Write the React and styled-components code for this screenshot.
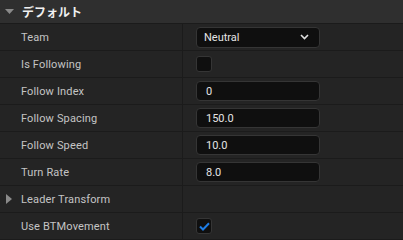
import styled, { createGlobalStyle } from "styled-components";

const GlobalStyle = createGlobalStyle`
  html, body {
    margin: 0;
    padding: 0;
    background: #242424;
  }
  * { box-sizing: border-box; }
`;

const Panel = styled.div`
  width: 403px;
  height: 240px;
  overflow: hidden;
  background: #242424;
  font-family: Roboto, "Noto Sans", "Noto Sans CJK JP", sans-serif;
  font-size: 11px;
  color: #c4c4c4;
`;

const Header = styled.div`
  display: flex;
  align-items: center;
  height: 24px;
  padding-left: 5px;
  gap: 8px;
  background: #2f2f2f;
  border-bottom: 1px solid #1b1b1b;
  color: #f0f0f0;
  font-family: "Noto Sans CJK JP", "Noto Sans", sans-serif;
  font-weight: bold;
  font-size: 12px;
`;

const Row = styled.div`
  display: grid;
  grid-template-columns: 182px 1px 1fr;
  height: 27px;
  border-bottom: 1px solid #1b1b1b;
`;

const Label = styled.div`
  display: flex;
  align-items: center;
  gap: 9px;
  padding-left: ${p => (p.$expander ? "6px" : "21px")};
  letter-spacing: 0.15px;
`;

const Divider = styled.div`
  background: #1b1b1b;
`;

const Value = styled.div`
  display: flex;
  align-items: center;
  padding-left: 13px;
`;

const Field = styled.div`
  display: flex;
  align-items: center;
  justify-content: space-between;
  width: 124px;
  height: ${p => (p.$tall ? "21px" : "20px")};
  padding: 0 10px 0 ${p => (p.$tall ? "7px" : "9px")};
  background: #0f0f0f;
  border: 1px solid #353535;
  border-radius: 4px;
  color: #e4e4e4;
  font-size: 11px;
`;

const Check = styled.div`
  display: flex;
  align-items: center;
  justify-content: center;
  width: 16px;
  height: 16px;
  background: #0f0f0f;
  border: 1px solid #353535;
  border-radius: 3px;
`;

const Chevron = () => (
  <svg width="9" height="6" viewBox="0 0 9 6">
    <path d="M1 1 L4.5 4.5 L8 1" fill="none" stroke="#e0e0e0" strokeWidth="1.6" />
  </svg>
);

const TriDown = () => (
  <svg width="9" height="5" viewBox="0 0 9 5">
    <path d="M0 0 H9 L4.5 5 Z" fill="#8a8a8a" />
  </svg>
);

const TriRight = () => (
  <svg width="6" height="10" viewBox="0 0 6 10">
    <path d="M0 0 V10 L6 5 Z" fill="#8a8a8a" />
  </svg>
);

const Tick = () => (
  <svg width="11" height="9" viewBox="0 0 11 9">
    <path d="M1 4.5 L4 7.5 L10 1.3" fill="none" stroke="#1e7de6" strokeWidth="2" />
  </svg>
);

const fields = [
  ["Follow Index", "0"],
  ["Follow Spacing", "150.0"],
  ["Follow Speed", "10.0"],
  ["Turn Rate", "8.0"],
];

export default function App() {
  return (
    <Panel>
      <GlobalStyle />
      <Header>
        <TriDown />
        デフォルト
      </Header>
      <Row>
        <Label>Team</Label>
        <Divider />
        <Value>
          <Field $tall>
            Neutral
            <Chevron />
          </Field>
        </Value>
      </Row>
      <Row>
        <Label>Is Following</Label>
        <Divider />
        <Value>
          <Check />
        </Value>
      </Row>
      {fields.map(([name, val]) => (
        <Row key={name}>
          <Label>{name}</Label>
          <Divider />
          <Value>
            <Field>{val}</Field>
          </Value>
        </Row>
      ))}
      <Row>
        <Label $expander>
          <TriRight />
          Leader Transform
        </Label>
        <Divider />
        <Value />
      </Row>
      <Row>
        <Label>Use BTMovement</Label>
        <Divider />
        <Value>
          <Check>
            <Tick />
          </Check>
        </Value>
      </Row>
    </Panel>
  );
}
